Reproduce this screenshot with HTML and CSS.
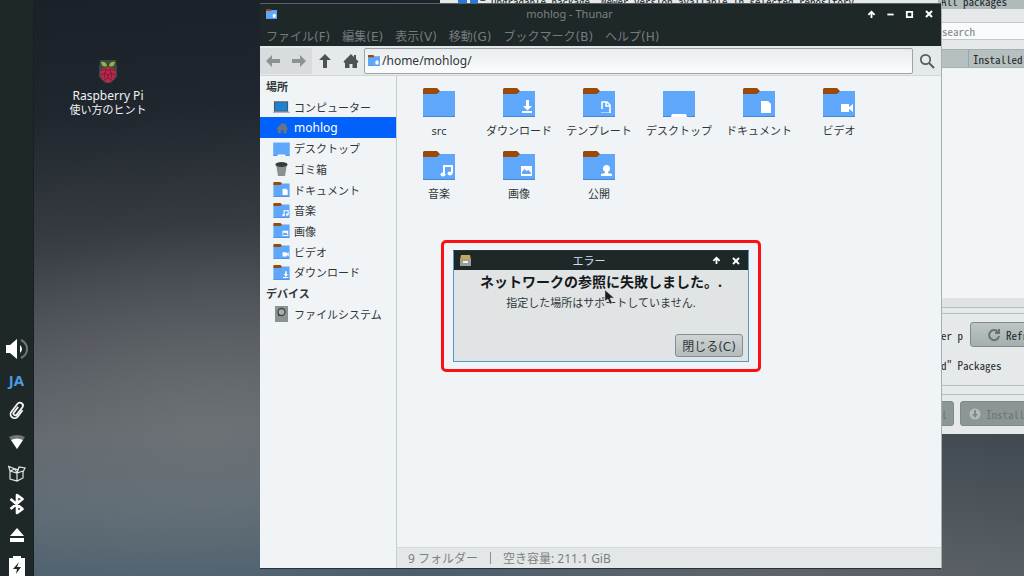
FILE: index.html
```html
<!DOCTYPE html>
<html lang="ja">
<head>
<meta charset="utf-8">
<title>mohlog - Thunar</title>
<link rel="stylesheet" href="styles.css">
</head>
<body>
<svg class="defs" aria-hidden="true">
  <symbol id="folder" viewBox="0 0 32 29">
    <path fill="#5ea7fb" d="M0 3h32v26H0z"/>
    <path fill="#4b86cc" d="M0 28h32v1H0z"/>
    <path fill="#9a4a08" d="M1 0h13l3 3-3 3H0V1z"/>
  </symbol>
  <symbol id="desk" viewBox="0 0 32 29">
    <path fill="#5ea7fb" d="M0 3h32v26H0z"/>
    <path fill="#4b86cc" d="M0 28h32v1H0z"/>
    <path fill="#fff" d="M8 29l1-3h14l1 3z"/>
  </symbol>
  <symbol id="down" viewBox="0 0 32 29"><use href="#folder"/><path fill="#fff" d="M23 12h3v6h3l-4.500 4.500L20 18h3zM19 23h10v2H19z"/></symbol>
  <symbol id="template" viewBox="0 0 32 29"><use href="#folder"/><path fill="none" stroke="#fff" stroke-width="1.600" d="M19 21v-7h5l3 3v8M23 14v4h4"/><path stroke="#fff" stroke-dasharray="1 1" d="M18.500 24.500h9"/></symbol>
  <symbol id="docs" viewBox="0 0 32 29"><use href="#folder"/><path fill="#fff" d="M18 13h7l3 3v9H18z"/></symbol>
  <symbol id="video" viewBox="0 0 32 29"><use href="#folder"/><path fill="#fff" d="M18 16h8v3l4-3v8l-4-3v3h-8z"/></symbol>
  <symbol id="music" viewBox="0 0 32 29"><use href="#folder"/><path fill="none" stroke="#fff" stroke-width="2" d="M21 23v-8h8v7"/><ellipse cx="20" cy="23.500" rx="2.500" ry="2" fill="#fff"/><ellipse cx="27" cy="22.500" rx="2.500" ry="2" fill="#fff"/></symbol>
  <symbol id="image" viewBox="0 0 32 29"><use href="#folder"/><path fill="#fff" d="M18 15h11v10H18z"/><path fill="#5ea7fb" d="M19 23v-2l2.500-3 2 2 2-1 2.500 3v1z"/></symbol>
  <symbol id="public" viewBox="0 0 32 29"><use href="#folder"/><circle cx="23.500" cy="17.500" r="3.500" fill="#fff"/><path fill="#fff" d="M22 20h3v2l4 1v2H18v-2l4-1z"/></symbol>
  <symbol id="homefolder" viewBox="0 0 32 29"><use href="#folder"/><path fill="#fff" d="M24 13l6 6h-2v6h-8v-6h-2z"/></symbol>
  <symbol id="house" viewBox="0 0 16 16"><path d="M8 1l3 3V2h2v4l2.500 2.500L14.500 10 14 9.500V15H9.500v-4h-3v4H2V9.500l-.5.500-1-1.500z"/></symbol>
  <symbol id="arrow" viewBox="0 0 16 16"><path d="M1 8l6-6v4h8v4H7v4z"/></symbol>
  <symbol id="up" viewBox="0 0 10 10"><path fill="none" stroke="#fff" stroke-width="2" d="M5 9V2M1.500 5.500L5 2l3.500 3.500"/></symbol>
  <symbol id="close" viewBox="0 0 10 10"><path stroke="#fff" stroke-width="2" d="M2 2l6 6M8 2L2 8"/></symbol>
</svg>

<main class="desktop">
  <nav class="panel" aria-label="パネル">
    <span class="tray"><svg width="24" height="24" viewBox="0 0 24 24"><path fill="#fff" d="M1 8h4l7-6v20l-7-6H1zM15 8q4 4 0 8z"/><path fill="none" stroke="#6f7778" stroke-width="2" d="M16 3q6 3 6 9t-6 9"/></svg></span>
    <span class="tray lang">JA</span>
    <span class="tray"><svg width="18" height="20" viewBox="0 0 18 20"><g transform="rotate(38 9 10)" fill="none" stroke="#f2f4f4" stroke-width="1.800"><path d="M13 6v8a4 4 0 0 1-8 0V4a3 3 0 0 1 6 0v9a1.800 1.800 0 0 1-3.600 0V6"/></g></svg></span>
    <span class="tray"><svg width="18" height="18" viewBox="0 0 18 18"><path fill="#6f7778" d="M1 4q8-4 16 0L9 16z"/><path fill="#fff" d="M3 7q6-3 12 0L9 16z"/></svg></span>
    <span class="tray"><svg width="18" height="18" viewBox="0 0 18 18"><path fill="none" stroke="#dfe4e4" stroke-width="1.200" d="M2 7l7 2 6-2v7l-6 3-7-2zM9 9v8M2 7L0.600 2.500 7 5l2 4 2-6 6 1-2 4M2 7l5-2 4 1"/></svg></span>
    <span class="tray"><svg width="16" height="22" viewBox="0 0 16 22"><path fill="none" stroke="#fff" stroke-width="2.600" stroke-linejoin="round" d="M1.500 6l12 10L8 20V2l5.500 4-12 10"/></svg></span>
    <span class="tray"><svg width="16" height="18" viewBox="0 0 16 18"><path fill="#fff" d="M8 2l7 8H1zM1 12h14v4H1z"/></svg></span>
    <span class="tray"><svg width="16" height="22" viewBox="0 0 16 22"><path fill="#fff" d="M0 3h4V1h8v2h4v19H0z"/><path fill="#1f2829" d="M10 7l-6 7h4l-1 5 5-7H8z"/></svg></span>
  </nav>

  <a class="shortcut" href="#hints">
    <svg width="20" height="24" viewBox="0 0 20 24">
      <path fill="#3f4648" d="M2 0h16l1 7 0 10-6 6H7l-6-6V7z"/>
      <path fill="#86bd35" d="M3 2q5-1 6 4-5 2-6-4zM17 2q-5-1-6 4 5 2 6-4z"/>
      <path fill="#c42448" d="M10 7l5 1 3 5-2 6-6 4-6-4-2-6 3-5z"/>
      <path fill="none" stroke="#682238" d="M4 10l4-1 2 2 2-2 4 1M3 15l4-2 3 2 3-2 4 2M7 13l1-3M13 13l-1-3M10 15v3l-4 2M10 18l4 2M7 13l-1 5M13 13l1 5"/>
    </svg>
    <span>Raspberry Pi</span><span>使い方のヒント</span>
  </a>

  <section class="packages" aria-label="Packages">
    <div class="pk-legend"><svg width="20" height="16" viewBox="0 0 20 16"><path fill="#2878e0" d="M0 0h20v16H0z"/><path fill="#e9f1fa" d="M9 0h3v13H9z"/></svg><span class="pk-info">= Upgradable package, Newer version available in selected repository</span><span class="pk-all">All packages</span></div>
    <div class="pk-search"><input type="search" placeholder="search" aria-label="search"></div>
    <div class="pk-head"><span>Installed</span></div>
    <div class="pk-list"></div>
    <div class="pk-scroll"></div>
    <div class="pk-options">
      <div class="pk-row"><span class="pk-cut">er p</span><button class="pk-btn refresh" type="button"><svg width="14" height="14" viewBox="0 0 14 14"><path fill="none" stroke="#687173" stroke-width="2" d="M11 4a5 5 0 1 0 1 4M12 1v4H8"/></svg>Refr</button></div>
      <div class="pk-note">d" Packages</div>
    </div>
    <div class="pk-actions">
      <button class="pk-btn off first" type="button" disabled>l</button>
      <button class="pk-btn off" type="button" disabled><svg width="12" height="12" viewBox="0 0 12 12"><circle cx="6" cy="6" r="5.500" fill="#b4bcbc"/><path fill="#808989" d="M5 2h2v4h2L6 10 3 6h2z"/></svg>Install</button>
    </div>
  </section>

  <section class="thunar" aria-label="mohlog - Thunar">
    <header class="titlebar">
      <svg width="11" height="10"><use href="#homefolder"/></svg>
      <h1>mohlog - Thunar</h1>
      <div class="controls">
        <button type="button" aria-label="巻き上げ"><svg width="9" height="9"><use href="#up"/></svg></button>
        <button type="button" aria-label="最小化"><svg width="9" height="9" viewBox="0 0 10 10"><path stroke="#fff" stroke-width="2" d="M1.500 5h7"/></svg></button>
        <button type="button" aria-label="最大化"><svg width="9" height="9" viewBox="0 0 10 10"><path fill="none" stroke="#fff" stroke-width="2" d="M2 2h6v6H2z"/></svg></button>
        <button type="button" aria-label="閉じる"><svg width="10" height="10"><use href="#close"/></svg></button>
      </div>
    </header>
    <nav class="menubar">
      <button type="button">ファイル(F)</button><button type="button">編集(E)</button><button type="button">表示(V)</button><button type="button">移動(G)</button><button type="button">ブックマーク(B)</button><button type="button">ヘルプ(H)</button>
    </nav>
    <div class="toolbar">
      <button class="dim" type="button" aria-label="戻る"><svg width="16" height="16"><use href="#arrow"/></svg></button>
      <button class="dim" type="button" aria-label="進む"><svg class="right" width="16" height="16"><use href="#arrow"/></svg></button>
      <button type="button" aria-label="上へ"><svg class="upward" width="16" height="16"><use href="#arrow"/></svg></button>
      <button type="button" aria-label="ホーム"><svg width="16" height="16"><use href="#house"/></svg></button>
      <div class="location"><svg width="12" height="11"><use href="#homefolder"/></svg><input type="text" value="/home/mohlog/" aria-label="場所"></div>
      <button type="button" aria-label="検索"><svg width="16" height="16" viewBox="0 0 16 16"><circle cx="6.500" cy="6.500" r="4.700" fill="none" stroke="#555b5d" stroke-width="1.700"/><path stroke="#555b5d" stroke-width="2" d="M10 10l5 5"/></svg></button>
    </div>
    <div class="content">
      <aside class="places">
        <ul>
          <li class="group">場所</li>
          <li><svg width="18" height="16" viewBox="0 0 18 16"><path fill="#47525a" d="M1 2h15v11H1z"/><path fill="#1e82d2" d="M2 3h13v9H2z"/><path fill="#8b9499" d="M0 13h18v1H0z"/></svg><a href="#computer">コンピューター</a></li>
          <li class="selected"><svg width="18" height="12" viewBox="-1 0 18 15" fill="#687385"><use href="#house"/></svg><a href="#home">mohlog</a></li>
          <li><svg width="17" height="15"><use href="#desk"/></svg><a href="#desktop">デスクトップ</a></li>
          <li><svg width="17" height="16" viewBox="0 0 17 16"><path fill="#8b9092" d="M3 3h11l-2 12H5z"/><ellipse cx="8.500" cy="3.500" rx="6" ry="2.500" fill="#363b3d"/></svg><a href="#trash">ゴミ箱</a></li>
          <li><svg width="17" height="15"><use href="#docs"/></svg><a href="#documents">ドキュメント</a></li>
          <li><svg width="17" height="15"><use href="#music"/></svg><a href="#music-dir">音楽</a></li>
          <li><svg width="17" height="15"><use href="#image"/></svg><a href="#pictures">画像</a></li>
          <li><svg width="17" height="15"><use href="#video"/></svg><a href="#videos">ビデオ</a></li>
          <li><svg width="17" height="15"><use href="#down"/></svg><a href="#downloads">ダウンロード</a></li>
          <li class="group">デバイス</li>
          <li><svg width="17" height="16" viewBox="0 0 17 16"><path fill="#8c9193" d="M2 0h13v16H2z"/><circle cx="8.500" cy="6" r="3.500" fill="#a9adaf" stroke="#3f4446" stroke-width="1.300"/><path fill="#3f4446" d="M5 7l3 3H5z"/></svg><a href="#filesystem">ファイルシステム</a></li>
        </ul>
      </aside>
      <div class="view">
        <div class="files">
          <figure><svg><use href="#folder"/></svg><figcaption>src</figcaption></figure>
          <figure><svg><use href="#down"/></svg><figcaption>ダウンロード</figcaption></figure>
          <figure><svg><use href="#template"/></svg><figcaption>テンプレート</figcaption></figure>
          <figure><svg><use href="#desk"/></svg><figcaption>デスクトップ</figcaption></figure>
          <figure><svg><use href="#docs"/></svg><figcaption>ドキュメント</figcaption></figure>
          <figure><svg><use href="#video"/></svg><figcaption>ビデオ</figcaption></figure>
          <figure><svg><use href="#music"/></svg><figcaption>音楽</figcaption></figure>
          <figure><svg><use href="#image"/></svg><figcaption>画像</figcaption></figure>
          <figure><svg><use href="#public"/></svg><figcaption>公開</figcaption></figure>
        </div>
        <footer class="status"><span>9 フォルダー</span><span class="bar"></span><span>空き容量: 211.1 GiB</span></footer>
      </div>
    </div>
  </section>

  <div class="highlight">
    <section class="dialog" role="alertdialog" aria-labelledby="error-title">
      <header class="titlebar dialog-title">
        <svg width="11" height="11" viewBox="0 0 11 11"><path fill="#c6a957" d="M1 0h9l1 5H0z"/><path fill="#9c9f98" d="M0 4h11v7H0z"/><path fill="#f1f1ec" d="M3 6h5v2H3z"/></svg>
        <h2 id="error-title">エラー</h2>
        <div class="controls">
          <button type="button" aria-label="巻き上げ"><svg width="9" height="9"><use href="#up"/></svg></button>
          <button type="button" aria-label="閉じる"><svg width="10" height="10"><use href="#close"/></svg></button>
        </div>
      </header>
      <div class="dialog-body">
        <p class="headline">ネットワークの参照に失敗しました。.</p>
        <p class="detail">指定した場所はサポートしていません.</p>
        <button class="dismiss" type="button">閉じる(C)</button>
      </div>
    </section>
  </div>
  <svg class="cursor" width="10" height="16" viewBox="0 0 10 16"><path fill="#1b1d1e" stroke="#c9cccd" stroke-width=".5" d="M1 1v11l3-2 2 5 2-1-2-5h4z"/></svg>
</main>
</body>
</html>
```

FILE: styles.css
```css
* { box-sizing: border-box; }

body {
  margin: 0;
  font-family: "Noto Sans", "Noto Sans CJK JP", sans-serif;
  font-size: 11px;
  color: #303638;
}

button, input { font: inherit; color: inherit; }
button { padding: 0; border: 0; background: none; }
a { color: inherit; text-decoration: none; }
h1, h2, p, ul, figure { margin: 0; padding: 0; font-weight: 400; }
svg { display: block; flex: none; }
.defs { position: absolute; width: 0; height: 0; }

.desktop {
  position: relative;
  height: 100vh;
  overflow: hidden;
  background:
    radial-gradient(ellipse 280px 200px at 20% 74%, rgba(118, 123, 124, .5), rgba(118, 123, 124, 0)),
    linear-gradient(176deg, #1a2128 0%, #20262d 18%, #353a41 36%, #50545b 54%, #62676e 68%, #5c6a74 80%, #4d606f 91%, #42586a 100%);
}
.desktop::after {
  content: "";
  position: absolute;
  right: 0;
  bottom: 0;
  width: 60%;
  height: 143px;
  background: linear-gradient(190deg, #3f494f, #555c62 50%, #696c71);
  mask-image: linear-gradient(90deg, transparent, #000 60%);
  z-index: 0;
}

.panel {
  position: absolute;
  top: 0;
  bottom: -5px;
  left: 0;
  width: 34px;
  display: flex;
  flex-direction: column;
  justify-content: flex-end;
  background: #1f2829;
  border-right: 1px solid #182022;
}
.tray {
  display: flex;
  height: 31px;
  align-items: center;
  justify-content: center;
}
.lang { color: #4a9be0; font-size: 15px; font-weight: 700; }

.shortcut {
  position: absolute;
  top: 60px;
  left: 58px;
  width: 100px;
  display: flex;
  flex-direction: column;
  align-items: center;
  color: #f0f2f3;
  line-height: 14px;
}
.shortcut svg { margin-bottom: 5px; }
.shortcut span:nth-of-type(1) { font-size: 12px; }

/* Package manager behind the file manager */
.packages {
  position: absolute;
  top: -9px;
  right: 0;
  left: 440px;
  z-index: 1;
  background: #e6e9ea;
  font-family: "Noto Sans Mono CJK JP", "Liberation Mono", monospace;
  color: #22282a;
  white-space: nowrap;
  overflow: hidden;
}
.pk-legend { display: flex; height: 18px; padding-left: 18px; line-height: 20px; }
.pk-legend svg { margin-right: 2px; }
.pk-info { flex: 1; }
.pk-all { width: 86px; padding-left: 3px; background: #b0baba; }
.pk-search { height: 40px; padding: 13px 0 9px 480px; }
.pk-search input {
  display: block;
  width: 100%;
  height: 18px;
  padding: 0 0 0 21px;
  border: 1px solid #c3c9ca;
  border-right: 0;
  background: #f8fafb;
}
.pk-search input::placeholder { color: #7d8486; opacity: 1; }
.pk-head {
  display: flex;
  justify-content: flex-end;
  height: 19px;
  background: #b7c0c0;
  border-top: 1px solid #a5afaf;
  border-bottom: 1px solid #a5afaf;
  line-height: 18px;
}
.pk-head span { width: 56px; padding-left: 4px; border-left: 1px solid #9aa5a5; }
.pk-list { height: 230px; background: #f1f5f8; }
.pk-scroll { height: 10px; border-bottom: 1px solid #b7bdbe; background: #e0e3e4; }
.pk-options {
  height: 73px;
  margin-top: 5px;
  padding-top: 8px;
  border-top: 1px solid #b7bdbe;
  border-bottom: 1px solid #b7bdbe;
}
.pk-row { display: flex; align-items: center; }
.pk-cut { flex: none; width: 530px; padding-left: 501px; }
.pk-btn {
  display: flex;
  align-items: center;
  gap: 5px;
  height: 25px;
  border: 1px solid #7f898a;
  border-radius: 3px;
  background: linear-gradient(#bdc5c5, #a5afaf);
}
.refresh { flex: none; width: 90px; padding-left: 16px; }
.pk-note { padding: 9px 0 0 501px; line-height: 18px; }
.pk-actions {
  display: flex;
  gap: 6px;
  margin-top: 8px;
  padding: 6px 0 8px;
  border-top: 1px solid #b7bdbe;
}
.off { flex: none; width: 90px; padding-left: 8px; background: #8d9696; color: #6c7575; }
.first { width: 514px; padding-right: 6px; justify-content: flex-end; }

/* File manager */
.thunar {
  position: absolute;
  top: 3px;
  right: 82px;
  bottom: 7px;
  left: 260px;
  z-index: 2;
  display: flex;
  flex-direction: column;
  border-right: 1px solid #a9afb1;
  border-bottom: 1px solid #2a3234;
  background: #f0f4f7;
}
.titlebar {
  display: flex;
  align-items: center;
  height: 21px;
  padding-left: 6px;
  background: #1f2829;
  color: #7a8283;
  text-align: center;
}
.thunar > .titlebar { border-top: 1px solid #596162; }
.titlebar h1, .titlebar h2 { flex: 1; font-size: 11px; line-height: 16px; }
.controls { display: flex; padding-right: 3px; }
.controls button {
  display: flex;
  flex: none;
  width: 19px;
  height: 16px;
  align-items: center;
  justify-content: center;
}
.menubar {
  display: flex;
  gap: 12px;
  height: 22px;
  padding: 0 6px;
  background: #1f2829;
  color: #747c7d;
}
.menubar button, .dismiss { font-family: "DejaVu Sans", "Noto Sans CJK JP", sans-serif; font-size: 12px; }
.menubar button { font-size: 12px; }
.toolbar {
  display: flex;
  align-items: center;
  height: 30px;
  border-bottom: 1px solid #d2d6d8;
  background: #e6e9eb;
}
.toolbar button {
  display: flex;
  flex: none;
  width: 26px;
  height: 26px;
  align-items: center;
  justify-content: center;
  fill: #4d5355;
}
.toolbar button:last-child { width: 28px; }
.toolbar .dim { background: #d9dcde; fill: #8c9193; }
.right { transform: rotate(180deg); }
.upward { transform: rotate(90deg); }
.location {
  display: flex;
  flex: 1;
  align-items: center;
  height: 26px;
  padding-left: 3px;
  border: 1px solid #9da4a7;
  border-radius: 2px;
  background: linear-gradient(#e9edef, #fbfcfd);
}
.location input {
  flex: 1;
  padding: 0 0 0 2px;
  border: 0;
  background: none;
  font-size: 12px;
}
.content { display: flex; flex: 1; }
.places { width: 137px; border-right: 1px solid #c8cdd0; }
.places ul { display: grid; grid-auto-rows: 1fr; height: 248px; list-style: none; }
.places li { display: flex; align-items: center; gap: 4px; padding-left: 13px; }
.places li svg { width: 17px; }
.places .group { padding-left: 6px; font-weight: 600; }
.places .selected { background: #0361fb; color: #fff; font-size: 12px; }
.view { display: flex; flex: 1; flex-direction: column; }
.files {
  display: grid;
  flex: 1;
  grid-template-columns: repeat(auto-fill, 80px);
  align-content: start;
  row-gap: 13px;
  padding: 12px 0 0 2px;
}
.files figure {
  display: flex;
  flex-direction: column;
  align-items: center;
  gap: 7px;
}
.files svg { width: 32px; height: 29px; }
.files figcaption { line-height: 14px; white-space: nowrap; }
.status {
  display: flex;
  align-items: center;
  gap: 12px;
  height: 21px;
  padding-left: 11px;
  border-top: 1px solid #d5d9db;
  background: #e4e7e8;
  color: #7a8183;
}
.status .bar { width: 1px; height: 12px; background: #8d9395; }
.status span { font-size: 12px; }

/* Error dialog and the frame drawn round it */
.highlight {
  position: absolute;
  top: 240px;
  left: 441px;
  z-index: 3;
  width: 320px;
  padding: 7px 9px;
  border: 3px solid #fb1015;
  border-radius: 5px;
}
.dialog { border: 1px solid #4f9ccb; border-top-color: #26343a; background: #e1e4e5; }
.dialog-title { height: 19px; color: #d6dff0; }
.dialog-body { display: flex; flex-direction: column; padding: 2px 5px 4px; text-align: center; }
.headline { font-size: 14px; line-height: 20px; font-weight: 700; color: #15191a; }
.detail { line-height: 22px; }
.dismiss {
  align-self: flex-end;
  width: 68px;
  height: 23px;
  margin-top: 20px;
  border: 1px solid #868d8e;
  border-radius: 3px;
  background: linear-gradient(#d0d4d5, #b4bbbb);
}
.cursor { position: absolute; top: 289px; left: 604px; z-index: 4; }
```
